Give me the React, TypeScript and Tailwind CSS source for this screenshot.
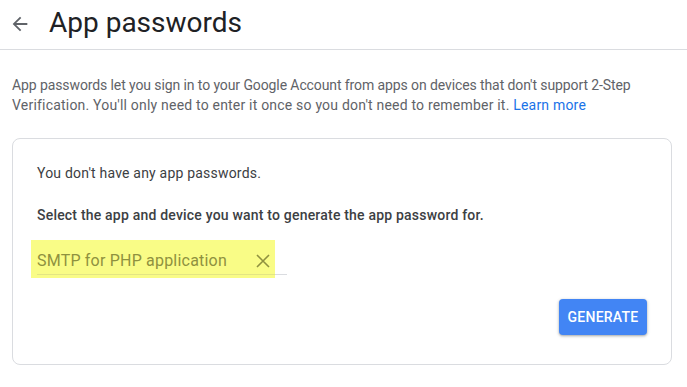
import React from "react";

export default function App() {
  return (
    <div className="w-[687px] h-[387px] bg-white font-['Roboto',sans-serif] overflow-hidden">
      <header className="flex items-center h-[50px] border-b border-[#dadce0]">
        <button className="ml-[9px] mb-[2px] text-[#5f6368]" aria-label="Back">
          <svg width="22" height="22" viewBox="0 0 24 24" fill="currentColor">
            <path d="M20 11H7.83l5.59-5.59L12 4l-8 8 8 8 1.41-1.41L7.83 13H20v-2z" />
          </svg>
        </button>
        <h1 className="ml-[18px] mb-[4px] text-[28px] leading-[36px] text-[#202124] font-normal">
          App passwords
        </h1>
      </header>

      <p className="mt-[25px] px-[12px] text-[14px] leading-5 text-[#5f6368] whitespace-nowrap tracking-[0.2px]">
        <span className="tracking-[-0.1px]">
          App passwords let you sign in to your Google Account from apps on devices that don't support 2-Step
        </span>
        <br />
        Verification. You'll only need to enter it once so you don't need to remember it.{" "}
        <a className="text-[#1a73e8]">Learn more</a>
      </p>

      <div className="mt-[23px] ml-[12px] w-[660px] border border-[#dadce0] rounded-lg px-6 pt-6 pb-[29px] tracking-[0.2px]">
        <p className="text-[14px] leading-5 text-[#3c4043]">You don't have any app passwords.</p>
        <p className="mt-[22px] text-[14px] leading-5 text-[#3c4043] font-medium">
          Select the app and device you want to generate the app password for.
        </p>

        <div className="relative mt-[20px] w-[250px]">
          <div className="absolute -left-[6px] -top-[5px] w-[244px] h-[38px] bg-[#f9fc86]" />
          <div className="relative flex items-end h-[30px] pb-[1px] border-b border-[#dadce0]">
            <span className="text-[16px] leading-6 text-[#8f913f]">SMTP for PHP application</span>
            <svg
              className="absolute left-[219px] top-[9px]"
              width="14"
              height="14"
              viewBox="0 0 14 14"
              stroke="#8f913f"
              strokeWidth="1.6"
            >
              <path d="M1 1l12 12M13 1L1 13" />
            </svg>
          </div>
          <div className="absolute left-0 bottom-0 w-[238px] h-px bg-[#e3e584]" />
        </div>

        <div className="flex justify-end mt-6">
          <button className="w-[88px] h-[36px] rounded bg-[#4285f4] text-white text-[14px] font-medium tracking-[0.25px] shadow-[0_1px_2px_rgba(60,64,67,0.3),0_1px_3px_1px_rgba(60,64,67,0.15)]">
            GENERATE
          </button>
        </div>
      </div>
    </div>
  );
}
